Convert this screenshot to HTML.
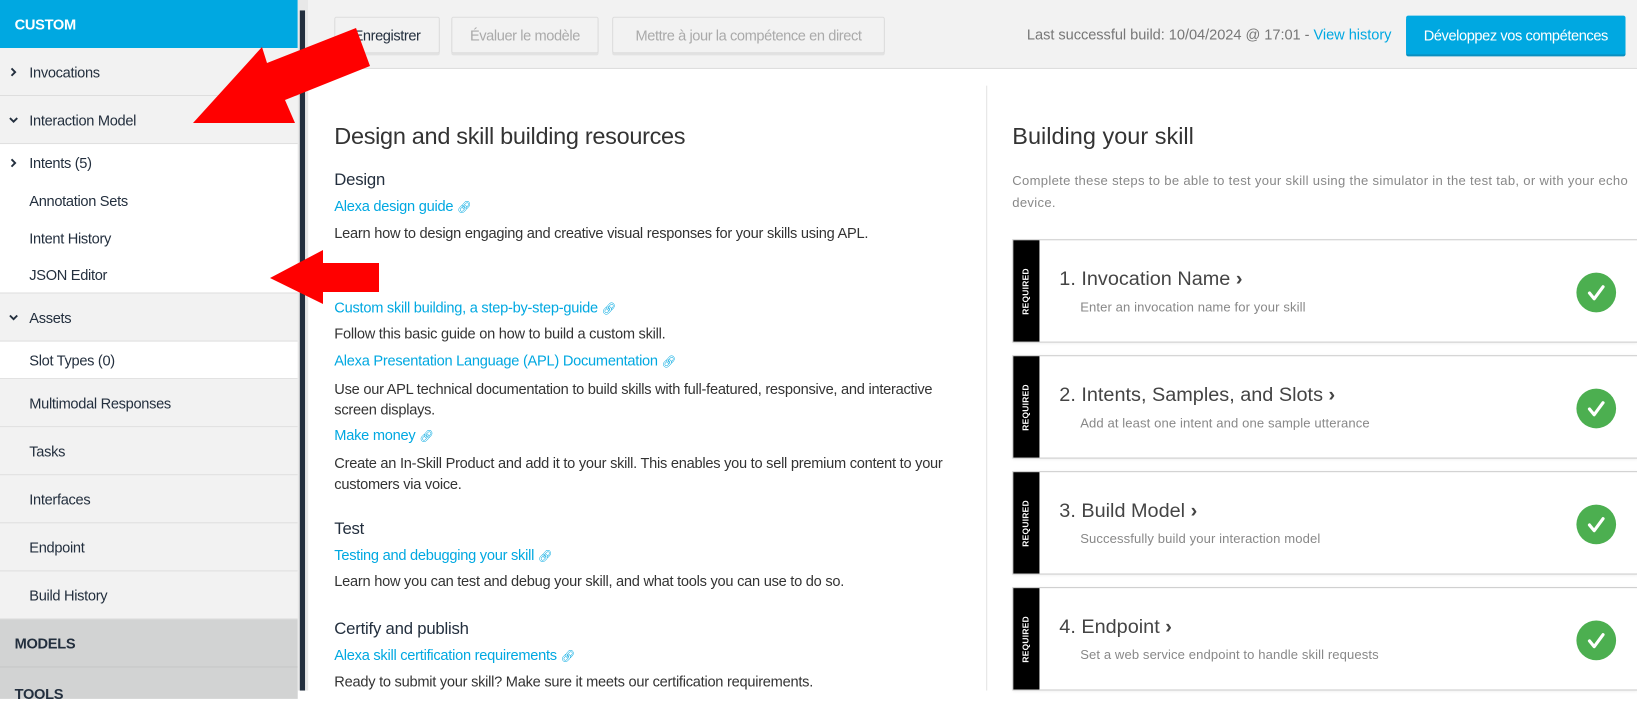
<!DOCTYPE html>
<html><head><meta charset="utf-8"><style>
*{margin:0;padding:0;box-sizing:border-box}
html,body{width:1637px;height:690px;overflow:hidden;background:#fff;font-family:"Liberation Sans",sans-serif}
#c{position:absolute;left:0;top:0;width:1567px;height:661px;transform:scale(1.04467);transform-origin:0 0;color:#232f3e}
.a{position:absolute;white-space:nowrap}
.row{position:absolute;left:0;width:285px;border-bottom:1px solid #ddd;font-size:14px;letter-spacing:-0.3px;color:#232f3e;display:flex;align-items:center;padding-left:28px}
.g{background:#f2f2f2}.w{background:#fff}
.chev{position:absolute;left:8px;top:50%;margin-top:-5px;width:10px;height:10px}
.btn{position:absolute;top:16px;height:35px;border:1px solid #ddd;border-radius:2px;background:#f2f2f2;font-size:14px;letter-spacing:-0.4px;display:flex;align-items:center;justify-content:center;color:#aaa;box-shadow:0 2px 0 #e2e2e2}
.t{font-size:14px;letter-spacing:-0.25px;color:#333}
.l{font-size:14px;letter-spacing:-0.25px;color:#00a8e1}
.h{font-size:16px;letter-spacing:-0.2px;color:#232f3e}
.card{position:absolute;left:969px;width:599px;height:99px;border:1px solid #ccc;background:#fff;box-shadow:0 1px 3px rgba(0,0,0,.08)}
.strip{position:absolute;left:0;top:0;bottom:0;width:25px;background:#000}
.req{position:absolute;left:12px;top:50%;transform:translate(-50%,-50%) rotate(-90deg);color:#fff;font-size:8px;font-weight:bold;letter-spacing:.3px}
.ct{position:absolute;left:44px;top:27px;font-size:19px;letter-spacing:0px;color:#444}
.cs{position:absolute;left:64px;top:57px;font-size:12.5px;letter-spacing:0.1px;color:#888}
.ok{position:absolute;left:539px;top:31px;width:38px;height:38px;border-radius:50%;background:#4caf50}
</style></head><body>
<div id="c">
<div class="row" style="top:0;height:46px;background:#00a8e1;color:#fff;font-weight:bold;padding-left:14px;border:0">CUSTOM</div>
<div class="row g" style="top:46px;height:46px"><svg class="chev" viewBox="0 0 10 10"><path d="M3 1.5L6.5 5 3 8.5" stroke="#232f3e" stroke-width="1.8" fill="none"/></svg>Invocations</div>
<div class="row g" style="top:92px;height:46px"><svg class="chev" viewBox="0 0 10 10"><path d="M1.5 3L5 6.5 8.5 3" stroke="#232f3e" stroke-width="1.8" fill="none"/></svg>Interaction Model</div>
<div class="row w" style="top:138px;height:36px;border:0"><svg class="chev" viewBox="0 0 10 10"><path d="M3 1.5L6.5 5 3 8.5" stroke="#232f3e" stroke-width="1.8" fill="none"/></svg>Intents (5)</div>
<div class="row w" style="top:174px;height:36px;border:0">Annotation Sets</div>
<div class="row w" style="top:210px;height:35px;border:0">Intent History</div>
<div class="row w" style="top:245px;height:36px">JSON Editor</div>
<div class="row g" style="top:281px;height:46px"><svg class="chev" viewBox="0 0 10 10"><path d="M1.5 3L5 6.5 8.5 3" stroke="#232f3e" stroke-width="1.8" fill="none"/></svg>Assets</div>
<div class="row w" style="top:327px;height:36px">Slot Types (0)</div>
<div class="row g" style="top:363px;height:46px">Multimodal Responses</div>
<div class="row g" style="top:409px;height:46px">Tasks</div>
<div class="row g" style="top:455px;height:46px">Interfaces</div>
<div class="row g" style="top:501px;height:46px">Endpoint</div>
<div class="row g" style="top:547px;height:46px">Build History</div>
<div class="row" style="top:593px;height:46px;background:#d2d3d3;font-weight:bold;padding-left:14px;border-bottom:1px solid #c4c4c4">MODELS</div>
<div class="row" style="top:639px;height:30px;background:#d2d3d3;font-weight:bold;padding-left:14px;align-items:flex-start;padding-top:17px;border:0">TOOLS</div>
<div class="a" style="left:285px;top:0;width:10px;height:661px;background:#e8e8e8"></div>
<div class="a" style="left:287px;top:10px;width:5px;height:651px;background:#232f3e"></div>
<div class="a" style="left:295px;top:0;width:1272px;height:66px;background:#f2f2f2;border-bottom:1px solid #ddd"></div>
<div class="btn" style="left:320px;width:101px;color:#232f3e">Enregistrer</div>
<div class="btn" style="left:432px;width:141px">Évaluer le modèle</div>
<div class="btn" style="left:586px;width:261px">Mettre à jour la compétence en direct</div>
<div class="a" style="left:983px;top:25px;font-size:14px;letter-spacing:-0.05px;color:#777">Last successful build: 10/04/2024 @ 17:01 - <span style="color:#00a8e1">View history</span></div>
<div class="a" style="left:1346px;top:15px;width:210px;height:37px;background:#00a8e1;color:#fff;font-size:14px;letter-spacing:-0.4px;display:flex;align-items:center;justify-content:center;border-radius:2px;box-shadow:0 2px 0 #0a8fbf">Développez vos compétences</div>
<div class="a" style="left:944px;top:82px;width:1px;height:579px;background:#e3e3e3"></div>
<div class="a" style="left:320px;top:118px;font-size:22.5px;letter-spacing:-0.3px;color:#333">Design and skill building resources</div>
<div class="a h" style="left:320px;top:164px">Design</div>
<div class="a l" style="left:320px;top:189px">Alexa design guide <span style="font-size:11px">🔗︎</span></div>
<div class="a t" style="left:320px;top:215px">Learn how to design engaging and creative visual responses for your skills using APL.</div>
<div class="a l" style="left:320px;top:286px">Custom skill building, a step-by-step-guide <span style="font-size:11px">🔗︎</span></div>
<div class="a t" style="left:320px;top:311px">Follow this basic guide on how to build a custom skill.</div>
<div class="a l" style="left:320px;top:337px">Alexa Presentation Language (APL) Documentation <span style="font-size:11px">🔗︎</span></div>
<div class="a t" style="left:320px;top:362px;line-height:20px">Use our APL technical documentation to build skills with full-featured, responsive, and interactive<br>screen displays.</div>
<div class="a l" style="left:320px;top:408px">Make money <span style="font-size:11px">🔗︎</span></div>
<div class="a t" style="left:320px;top:433px;line-height:20px">Create an In-Skill Product and add it to your skill. This enables you to sell premium content to your<br>customers via voice.</div>
<div class="a h" style="left:320px;top:498px">Test</div>
<div class="a l" style="left:320px;top:523px">Testing and debugging your skill <span style="font-size:11px">🔗︎</span></div>
<div class="a t" style="left:320px;top:548px">Learn how you can test and debug your skill, and what tools you can use to do so.</div>
<div class="a h" style="left:320px;top:594px">Certify and publish</div>
<div class="a l" style="left:320px;top:619px">Alexa skill certification requirements <span style="font-size:11px">🔗︎</span></div>
<div class="a t" style="left:320px;top:644px">Ready to submit your skill? Make sure it meets our certification requirements.</div>
<div class="a" style="left:969px;top:118px;font-size:22.5px;letter-spacing:0px;color:#333">Building your skill</div>
<div class="a" style="left:969px;top:163px;font-size:12.5px;letter-spacing:0.3px;color:#888;line-height:21px">Complete these steps to be able to test your skill using the simulator in the test tab, or with your echo<br>device.</div>
<div class="card" style="top:229px"><div class="strip"><span class="req">REQUIRED</span></div><div class="ct">1. Invocation Name <b>›</b></div><div class="cs">Enter an invocation name for your skill</div><div class="ok"><svg width="38" height="38"><path d="M12.5 19.5l4.5 5.5 8.5-11.5" stroke="#fff" stroke-width="3" fill="none" stroke-linecap="round" stroke-linejoin="round"/></svg></div></div>
<div class="card" style="top:340px"><div class="strip"><span class="req">REQUIRED</span></div><div class="ct">2. Intents, Samples, and Slots <b>›</b></div><div class="cs">Add at least one intent and one sample utterance</div><div class="ok"><svg width="38" height="38"><path d="M12.5 19.5l4.5 5.5 8.5-11.5" stroke="#fff" stroke-width="3" fill="none" stroke-linecap="round" stroke-linejoin="round"/></svg></div></div>
<div class="card" style="top:451px"><div class="strip"><span class="req">REQUIRED</span></div><div class="ct">3. Build Model <b>›</b></div><div class="cs">Successfully build your interaction model</div><div class="ok"><svg width="38" height="38"><path d="M12.5 19.5l4.5 5.5 8.5-11.5" stroke="#fff" stroke-width="3" fill="none" stroke-linecap="round" stroke-linejoin="round"/></svg></div></div>
<div class="card" style="top:562px"><div class="strip"><span class="req">REQUIRED</span></div><div class="ct">4. Endpoint <b>›</b></div><div class="cs">Set a web service endpoint to handle skill requests</div><div class="ok"><svg width="38" height="38"><path d="M12.5 19.5l4.5 5.5 8.5-11.5" stroke="#fff" stroke-width="3" fill="none" stroke-linecap="round" stroke-linejoin="round"/></svg></div></div>
</div>
<svg style="position:absolute;left:0;top:0" width="1637" height="690">
<polygon fill="#ff0000" points="193,123 262,47 267,63 356,28 370,66 285,100 295,123"/>
<polygon fill="#ff0000" points="270,278 323,250 323,263 379,263 379,292 323,292 323,304"/>
</svg>
</body></html>
